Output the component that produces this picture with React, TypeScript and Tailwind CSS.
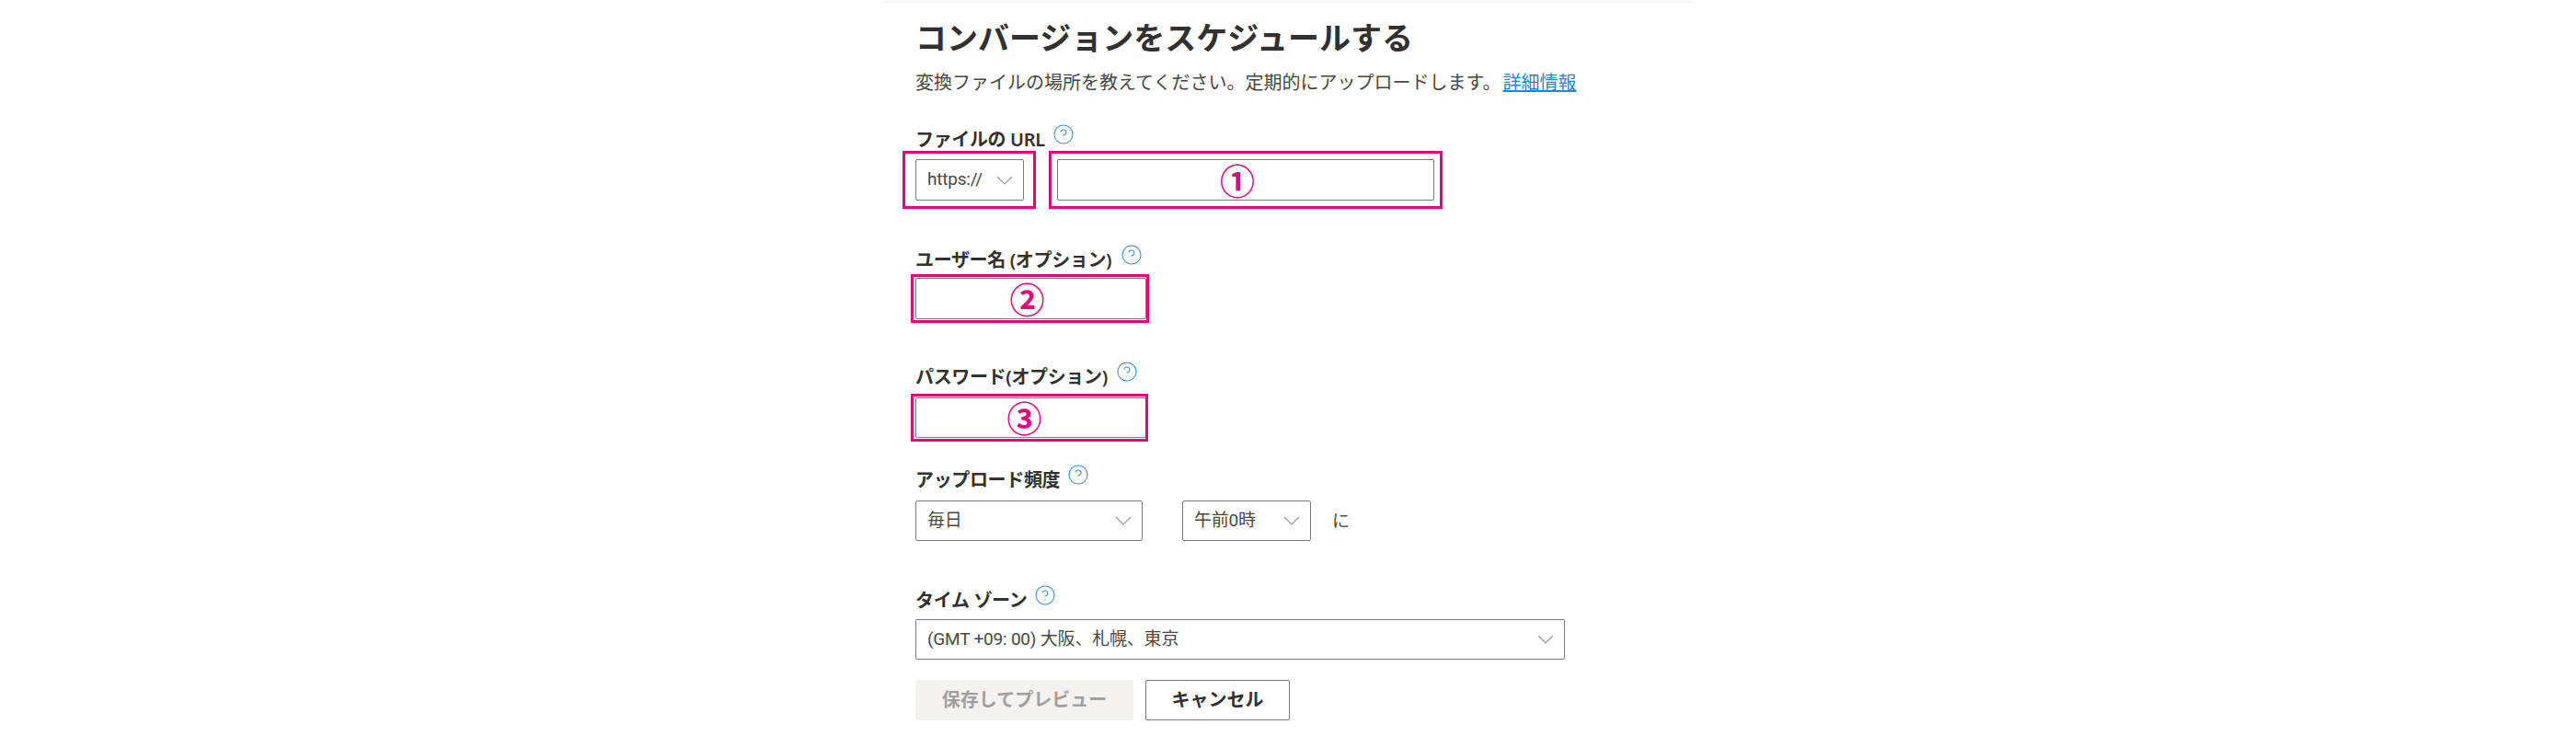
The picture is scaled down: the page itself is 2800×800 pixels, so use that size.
import React from "react";
import { CircleHelp } from "lucide-react";

function Chevron() {
  return (
    <svg width="18" height="10" viewBox="0 0 18 10" fill="none" className="shrink-0">
      <polyline points="1,1 9,9 17,1" stroke="#9a9896" strokeWidth="1.2" />
    </svg>
  );
}

function Label({ text, className, gap }: { text: string; className: string; gap: string }) {
  return (
    <div className={`flex h-7 items-center text-[20px] leading-7 font-semibold text-[#323130] ${className}`}>
      <span className="tracking-[-0.35px] whitespace-pre">{text}</span>
      <CircleHelp size={24} strokeWidth={1.1} className={`text-[#3f8fdc] -translate-y-[6px] ${gap}`} />
    </div>
  );
}

function Select({ value, className }: { value: string; className: string }) {
  return (
    <div className={`flex items-center justify-between border border-[#7a7977] rounded-[2px] bg-white pl-3 pr-[11px] font-['Roboto','Noto_Sans_CJK_JP',sans-serif] text-[19px] tracking-[-0.2px] text-[#4a4846] ${className}`}>
      <span className="whitespace-pre">{value}</span>
      <Chevron />
    </div>
  );
}

function Mark({ className }: { className: string }) {
  return <div className={`absolute border-[3px] border-[#e6007e] pointer-events-none ${className}`} />;
}

function Num({ n, className }: { n: string; className: string }) {
  return (
    <span className={`absolute top-1/2 left-1/2 -translate-x-1/2 -translate-y-1/2 text-[38px] leading-none font-semibold text-[#e6007e] ${className}`}>
      {n}
    </span>
  );
}

export default function App() {
  return (
    <div className="w-[2800px] h-[800px] overflow-hidden bg-white font-['Noto_Sans','Noto_Sans_CJK_JP',sans-serif]">
      <div className="ml-[960px] w-[880px]">
        <div className="h-[3px] bg-[#f6f6f6]" />
        <div className="pl-[35px]">
          <h1 className="mt-[14px] h-12 text-[34px] leading-[48px] font-semibold text-[#323130] whitespace-nowrap">
            コンバージョンをスケジュールする
          </h1>
          <p className="mt-[11px] h-7 text-[20px] leading-7 text-[#484644] whitespace-nowrap">
            変換ファイルの場所を教えてください。定期的にアップロードします。
            <span className="ml-[2px] text-[#1f86d8] underline">詳細情報</span>
          </p>

          <Label text="ファイルの URL" className="mt-[34px]" gap="ml-[8px]" />
          <div className="mt-[7px] flex h-[45px] gap-[36px]">
            <div className="relative w-[118px]">
              <Select value="https://" className="h-full w-full" />
              <Mark className="-inset-y-[9px] -left-[14px] -right-[13px]" />
            </div>
            <div className="relative w-[410px] border border-[#7a7977] rounded-[2px]">
              <Mark className="-inset-y-[10px] -inset-x-[10px]" />
              <Num n="①" className="ml-[-9px]" />
            </div>
          </div>

          <Label text="ユーザー名 (オプション)" className="mt-[51px]" gap="ml-[10px]" />
          <div className="relative mt-[5px] h-[45px] w-[251px] border border-[#7a7977] rounded-[2px]">
            <Mark className="-inset-y-[5px] -left-[6px] -right-[4px]" />
            <Num n="②" className="ml-[-4px]" />
          </div>

          <Label text="パスワード(オプション)" className="mt-[49px]" gap="ml-[9px]" />
          <div className="relative mt-[8px] h-[44px] w-[251px] border border-[#7a7977] rounded-[2px]">
            <Mark className="-inset-y-[5px] -left-[6px] -right-[3px]" />
            <Num n="③" className="ml-[-7px]" />
          </div>

          <Label text="アップロード頻度" className="mt-[32px]" gap="ml-[8px]" />
          <div className="mt-2 flex h-[44px] items-center">
            <Select value="毎日" className="h-full w-[247px]" />
            <Select value="午前0時" className="ml-[43px] h-full w-[140px]" />
            <span className="ml-[23px] text-[19px] text-[#4a4846]">に</span>
          </div>

          <Label text="タイム ゾーン" className="mt-[51px]" gap="ml-[8px]" />
          <Select value="(GMT +09: 00) 大阪、札幌、東京" className="mt-[6px] h-[44px] w-[706px]" />

          <div className="mt-[22px] flex h-[44px] gap-[13px]">
            <div className="flex w-[237px] items-center justify-center rounded-[2px] bg-[#f3f2f1] text-[20px] font-semibold text-[#a19f9d]">
              保存してプレビュー
            </div>
            <div className="flex w-[157px] items-center justify-center rounded-[2px] border border-[#7a7977] text-[20px] font-semibold text-[#323130]">
              キャンセル
            </div>
          </div>
        </div>
      </div>
    </div>
  );
}
